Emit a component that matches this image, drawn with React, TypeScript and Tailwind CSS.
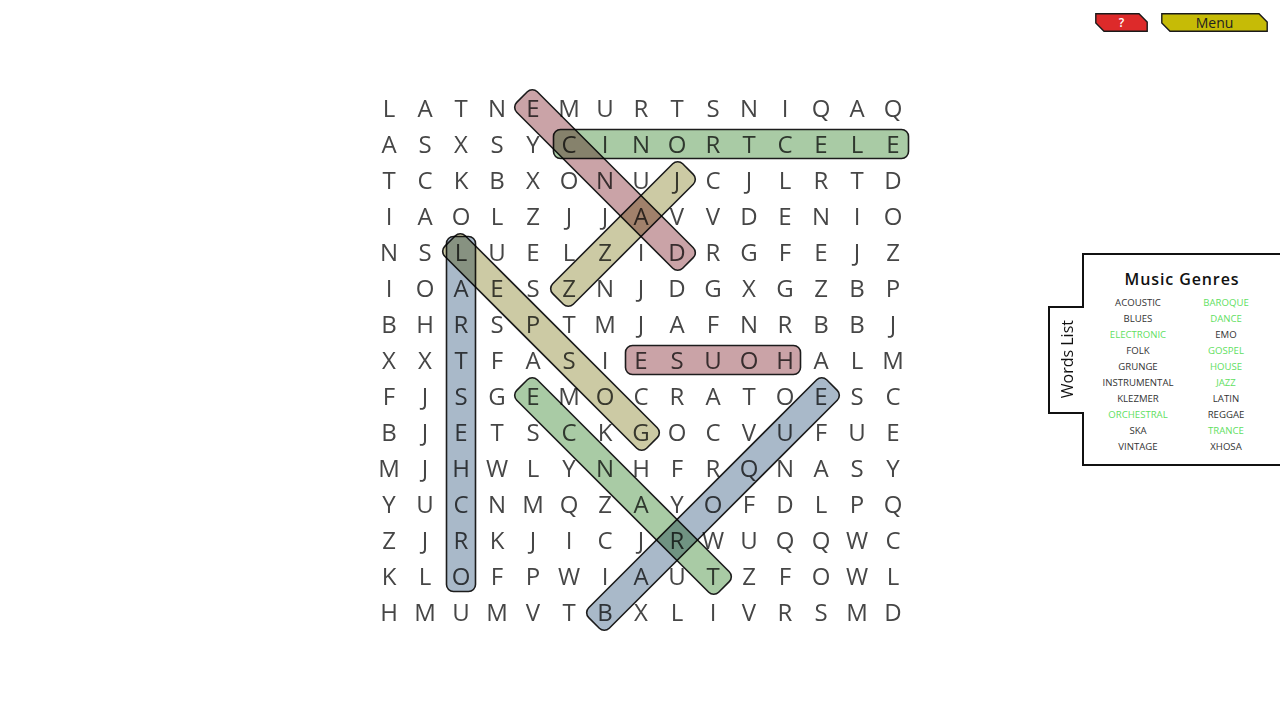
import React from "react";

const ROWS = [
  "LATNEMURTSNIQAQ",
  "ASXSYCINORTCELE",
  "TCKBXONUJCJLRTD",
  "IAOLZJJAVVDENIO",
  "NSLUELZIDRGFEJZ",
  "IOAESZNJDGXGZBP",
  "BHRSPTMJAFNRBBJ",
  "XXTFASIESUOHALM",
  "FJSGEMOCRATOESC",
  "BJETSCKGOCVUFUE",
  "MJHWLYNHFRQNASY",
  "YUCNMQZAYOFDLPQ",
  "ZJRKJICJRWUQQWC",
  "KLOFPWIAUTZFOWL",
  "HMUMVTBXLIVRSMD",
];

const GREEN = "#a9cba5";
const PINK = "#caa3a7";
const KHAKI = "#cccaa4";
const BLUE = "#a9b9c9";

const STRIPS: [number, number, number, number, string][] = [
  [1, 5, 1, 14, GREEN],
  [0, 4, 4, 8, PINK],
  [2, 8, 5, 5, KHAKI],
  [4, 2, 13, 2, BLUE],
  [4, 2, 9, 7, KHAKI],
  [7, 7, 7, 11, PINK],
  [8, 4, 13, 9, GREEN],
  [14, 6, 8, 12, BLUE],
];

const WORDS: [string, boolean][] = [
  ["ACOUSTIC", false],
  ["BAROQUE", true],
  ["BLUES", false],
  ["DANCE", true],
  ["ELECTRONIC", true],
  ["EMO", false],
  ["FOLK", false],
  ["GOSPEL", true],
  ["GRUNGE", false],
  ["HOUSE", true],
  ["INSTRUMENTAL", false],
  ["JAZZ", true],
  ["KLEZMER", false],
  ["LATIN", false],
  ["ORCHESTRAL", true],
  ["REGGAE", false],
  ["SKA", false],
  ["TRANCE", true],
  ["VINTAGE", false],
  ["XHOSA", false],
];

const CELL = 36;

function Strips() {
  return (
    <svg
      className="pointer-events-none absolute inset-0 overflow-visible"
      width={540}
      height={540}
      viewBox="0 0 540 540"
    >
      {STRIPS.map(([r1, c1, r2, c2, color], i) => {
        const x1 = 18 + c1 * CELL;
        const y1 = 18 + r1 * CELL;
        const x2 = 18 + c2 * CELL;
        const y2 = 18 + r2 * CELL;
        const cx = (x1 + x2) / 2;
        const cy = (y1 + y2) / 2;
        const len = Math.hypot(x2 - x1, y2 - y1);
        const ang = (Math.atan2(y2 - y1, x2 - x1) * 180) / Math.PI;
        const w = len + 31;
        const h = 29;
        return (
          <rect
            key={i}
            x={cx - w / 2}
            y={cy - h / 2}
            width={w}
            height={h}
            rx={7}
            ry={7}
            fill={color}
            stroke="#1c1c1c"
            strokeWidth={1.6}
            style={{ mixBlendMode: "multiply" }}
            transform={`rotate(${ang} ${cx} ${cy})`}
          />
        );
      })}
    </svg>
  );
}

function ShapeButton({
  width,
  fill,
  children,
  textClass,
}: {
  width: number;
  fill: string;
  children: React.ReactNode;
  textClass: string;
}) {
  const h = 19;
  const c = 9;
  const pts = `0.8,0.8 ${width - c},0.8 ${width - 0.8},${c} ${width - 0.8},${h - 0.8} ${c},${h - 0.8} 0.8,${h - c}`;
  return (
    <button
      className="relative flex h-[19px] items-center justify-center"
      style={{ width }}
    >
      <svg className="absolute inset-0" width={width} height={h} viewBox={`0 0 ${width} ${h}`}>
        <polygon points={pts} fill={fill} stroke="#1a1a1a" strokeWidth={1.4} />
      </svg>
      <span className={`relative ${textClass}`}>{children}</span>
    </button>
  );
}

export default function App() {
  return (
    <div
      className="relative h-[720px] w-[1280px] overflow-hidden bg-white"
      style={{ fontFamily: '"Open Sans", "Noto Sans", sans-serif' }}
    >
      <header className="flex h-[32px] items-start justify-end gap-[13px] pr-[12px] pt-[13px]">
        <ShapeButton width={53} fill="#dd2a2a" textClass="text-[12px] font-semibold leading-none text-white">
          ?
        </ShapeButton>
        <ShapeButton width={107} fill="#c6bb06" textClass="text-[14px] leading-none text-[#222]">
          Menu
        </ShapeButton>
      </header>

      <main className="flex justify-center pl-[2px] pt-[58px]">
        <div className="isolate relative w-[540px]">
          <div className="grid grid-cols-[repeat(15,36px)] grid-rows-[repeat(15,36px)]">
            {ROWS.map((row, r) =>
              row.split("").map((ch, c) => (
                <div
                  key={`${r}-${c}`}
                  className="flex items-center justify-center text-[24px] leading-[36px] text-[#464646]"
                >
                  {ch}
                </div>
              ))
            )}
          </div>
          <Strips />
        </div>
      </main>

      <aside className="absolute right-0 top-[253px] flex items-center">
        <div className="relative z-10 mr-[-2px] flex h-[108px] w-[36px] items-center justify-center border-y-2 border-l-2 border-[#111] bg-white">
          <span className="rotate-180 text-[16px] leading-none text-[#111] [writing-mode:vertical-rl]">
            Words List
          </span>
        </div>
        <div className="h-[213px] w-[198px] border-y-2 border-l-2 border-[#111] bg-white pb-[9px] pl-[10px] pr-[10px] pt-[14px]">
          <div className="text-center text-[16px] font-semibold leading-[20px] tracking-[0.9px] text-[#111]">
            Music Genres
          </div>
          <div className="mt-[6px] grid grid-cols-2">
            {WORDS.map(([w, found]) => (
              <div
                key={w}
                className={`text-center text-[9.6px] leading-[16px] ${found ? "text-[#5fe05f]" : "text-[#333]"}`}
              >
                {w}
              </div>
            ))}
          </div>
        </div>
      </aside>
    </div>
  );
}
